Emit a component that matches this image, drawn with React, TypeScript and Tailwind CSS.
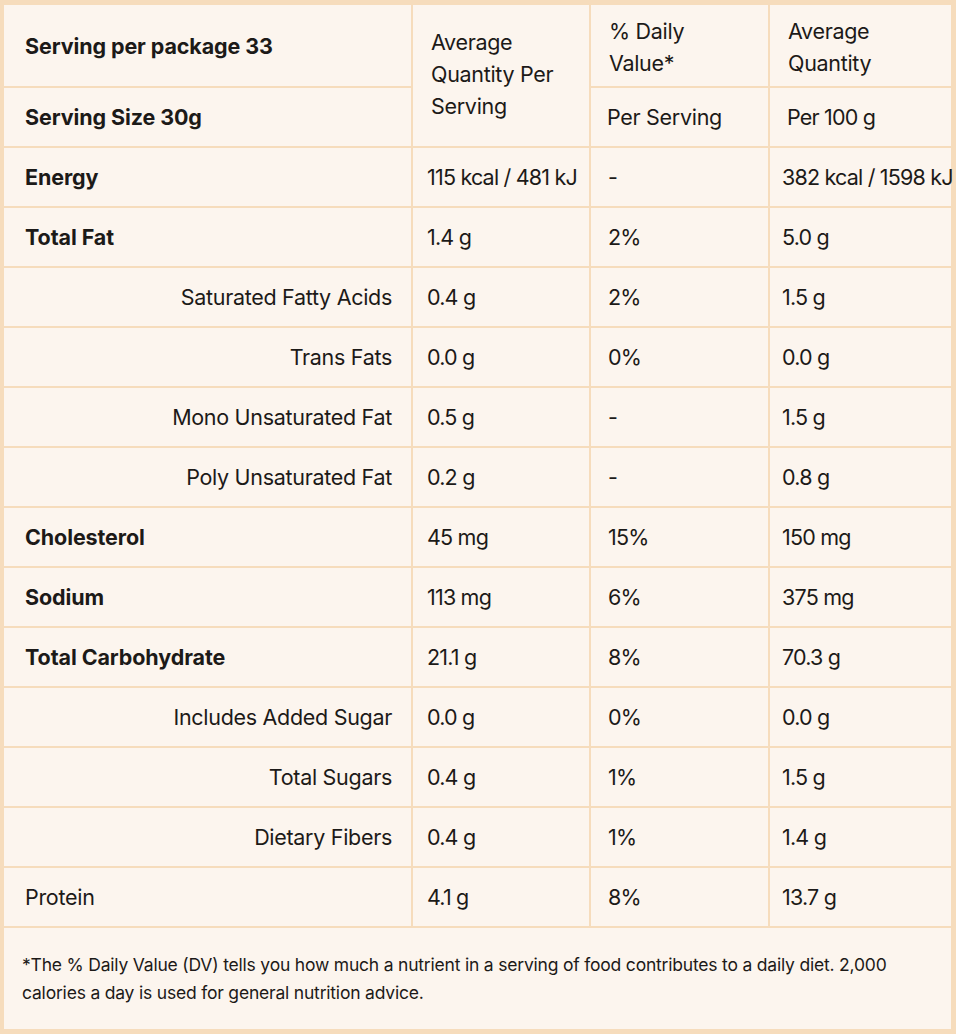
import React from "react";

type Row = { name: string; bold?: boolean; sub?: boolean; a: string; b: string; c: string };

const rows: Row[] = [
  { name: "Energy", bold: true, a: "115 kcal / 481 kJ", b: "-", c: "382 kcal / 1598 kJ" },
  { name: "Total Fat", bold: true, a: "1.4 g", b: "2%", c: "5.0 g" },
  { name: "Saturated Fatty Acids", sub: true, a: "0.4 g", b: "2%", c: "1.5 g" },
  { name: "Trans Fats", sub: true, a: "0.0 g", b: "0%", c: "0.0 g" },
  { name: "Mono Unsaturated Fat", sub: true, a: "0.5 g", b: "-", c: "1.5 g" },
  { name: "Poly Unsaturated Fat", sub: true, a: "0.2 g", b: "-", c: "0.8 g" },
  { name: "Cholesterol", bold: true, a: "45 mg", b: "15%", c: "150 mg" },
  { name: "Sodium", bold: true, a: "113 mg", b: "6%", c: "375 mg" },
  { name: "Total Carbohydrate", bold: true, a: "21.1 g", b: "8%", c: "70.3 g" },
  { name: "Includes Added Sugar", sub: true, a: "0.0 g", b: "0%", c: "0.0 g" },
  { name: "Total Sugars", sub: true, a: "0.4 g", b: "1%", c: "1.5 g" },
  { name: "Dietary Fibers", sub: true, a: "0.4 g", b: "1%", c: "1.4 g" },
  { name: "Protein", a: "4.1 g", b: "8%", c: "13.7 g" },
];

const cell = "bg-[#fcf5ee] flex items-center whitespace-nowrap";

export default function App() {
  return (
    <div
      className="w-[956px] h-[1034px] bg-[#f6dcbc] pt-[5px] pl-[4px] pr-[5px] pb-[5px] text-[#1c1a18]"
      style={{ fontFamily: 'Inter, "Noto Sans", sans-serif' }}
    >
      <div className="grid grid-cols-[407px_176px_177px_181px] grid-rows-[81px_58px_repeat(13,58px)_101px] gap-[2px] h-full text-[21.5px] leading-[32px] tracking-[-0.3px]">
        {/* header */}
        <div className={`${cell} pl-[21px] font-bold tracking-[-0.1px]`}>Serving per package 33</div>
        <div className="bg-[#fcf5ee] row-span-2 flex items-center pl-[18px] pr-2 pb-[4px]">
          <span>
            Average
            <br />
            Quantity Per
            <br />
            Serving
          </span>
        </div>
        <div className={`${cell} pl-[18px] pt-[3px]`}>
          <span>
            % Daily
            <br />
            Value*
          </span>
        </div>
        <div className={`${cell} pl-[18px] pt-[3px]`}>
          <span>
            Average
            <br />
            Quantity
          </span>
        </div>
        <div className={`${cell} pl-[21px] font-bold tracking-[-0.1px]`}>Serving Size 30g</div>
        <div className={`${cell} pl-[16px]`}>Per Serving</div>
        <div className={`${cell} pl-[17px] tracking-[-0.8px]`}>Per 100 g</div>

        {rows.map((r) => (
          <React.Fragment key={r.name}>
            <div
              className={`${cell} ${r.sub ? "justify-end pr-[19px]" : "pl-[21px]"} ${r.bold ? "font-bold tracking-[-0.1px]" : ""}`}
            >
              {r.name}
            </div>
            <div className={`${cell} pl-[14px] tracking-[-0.8px]`}>{r.a}</div>
            <div className={`${cell} pl-[17px] tracking-[-0.8px]`}>{r.b}</div>
            <div className={`${cell} pl-[12px] relative z-10 tracking-[-0.8px]`}>{r.c}</div>
          </React.Fragment>
        ))}

        <div className="col-span-4 bg-[#fcf5ee] flex items-center pl-[18px] pr-[30px] text-[17.5px] leading-[28px] tracking-[-0.2px]">
          <p>
            *The % Daily Value (DV) tells you how much a nutrient in a serving of food contributes to a daily diet. 2,000
            <br />
            calories a day is used for general nutrition advice.
          </p>
        </div>
      </div>
    </div>
  );
}
